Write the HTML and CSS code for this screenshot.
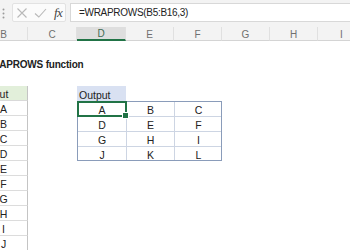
FILE: index.html
```html
<!DOCTYPE html>
<html>
<head>
<meta charset="utf-8">
<link rel="stylesheet" href="styles.css">
</head>
<body>
<div class="app">
  <div class="fbar">
    <svg class="grip" width="3" height="11" viewBox="0 0 3 11"><circle cx="1.5" cy="1.5" r="1"/><circle cx="1.5" cy="5.5" r="1"/><circle cx="1.5" cy="9.5" r="1"/></svg>
    <div class="fbtns">
      <svg class="ico" width="12" height="12" viewBox="0 0 12 12"><path d="M1.5 1.5 L10.5 10.5 M10.5 1.5 L1.5 10.5"/></svg>
      <svg class="ico" width="13" height="12" viewBox="0 0 13 12"><path d="M1 6.5 L4.8 10 L12 2"/></svg>
      <span class="fx">fx</span>
    </div>
    <div class="finput">=WRAPROWS(B5:B16,3)</div>
  </div>
  <div class="sheet">
    <div class="grid">
      <div class="ch">B</div>
      <div class="ch">C</div>
      <div class="ch sel">D</div>
      <div class="ch">E</div>
      <div class="ch">F</div>
      <div class="ch">G</div>
      <div class="ch">H</div>
      <div class="ch">I</div>

      <div class="title">WRAPROWS function</div>

      <div class="in-h">Input</div>
      <div class="in r6">A</div>
      <div class="in r7">B</div>
      <div class="in r8">C</div>
      <div class="in r9">D</div>
      <div class="in r10">E</div>
      <div class="in r11">F</div>
      <div class="in r12">G</div>
      <div class="in r13">H</div>
      <div class="in r14">I</div>
      <div class="in r15">J</div>
      <div class="in r16">K</div>

      <div class="out-h">Output</div>
      <div class="out">
        <div class="oc active">A</div>
        <div class="oc">B</div>
        <div class="oc">C</div>
        <div class="oc">D</div>
        <div class="oc">E</div>
        <div class="oc">F</div>
        <div class="oc">G</div>
        <div class="oc">H</div>
        <div class="oc">I</div>
        <div class="oc">J</div>
        <div class="oc">K</div>
        <div class="oc">L</div>
      </div>
    </div>
  </div>
</div>
</body>
</html>
```

FILE: styles.css
```css
* { box-sizing: border-box; }
html, body { margin: 0; padding: 0; background: #fff; }
.app { width: 350px; height: 250px; overflow: hidden; font-family: "Liberation Sans", Arial, sans-serif; }

.fbar {
  height: 27px;
  background: #f3f3f3;
  display: flex;
  align-items: flex-start;
  padding-top: 3px;
}
.grip { fill: #9a9a9a; margin: 5px 0 0 2px; }
.fbtns {
  margin-left: 7px;
  width: 54px;
  height: 19px;
  background: #fbfbfb;
  border: 1px solid #e2e2e2;
  border-radius: 2px;
  display: flex;
  align-items: center;
  padding-left: 3px;
  gap: 6px;
}
.ico { fill: none; stroke: #b9b9b9; stroke-width: 1.1; }
.fx {
  font-family: "Liberation Serif", "Times New Roman", serif;
  font-style: italic;
  font-size: 13px;
  color: #444;
  margin-left: 1px;
  letter-spacing: -0.5px;
}
.finput {
  margin-left: 4px;
  flex: 1;
  height: 19px;
  background: #fff;
  border: 1px solid #d8d8d8;
  border-right: none;
  padding-left: 8px;
  font-size: 10px;
  letter-spacing: -0.3px;
  color: #222;
  line-height: 17px;
}

.sheet { width: 350px; overflow: hidden; }
.grid {
  margin-left: -20px;
  display: grid;
  grid-template-columns: 48px 49px 49px 48px 48px 48px 48px 48px;
  grid-template-rows: 14px repeat(16, 15px);
}
.ch {
  grid-row: 1;
  background: #f3f3f3;
  border-bottom: 1px solid #d4d4d4;
  border-right: 1px solid #e0e0e0;
  font-size: 10px;
  color: #707070;
  display: flex;
  align-items: center;
  justify-content: center;
  padding-top: 1px;
}
.ch.sel {
  background: #dedede;
  border-bottom: 2px solid #217346;
  color: #3f6a52;
}

.title {
  grid-row: 3;
  grid-column: 1 / span 4;
  font-weight: bold;
  font-size: 10px;
  letter-spacing: -0.2px;
  color: #222;
  padding-left: 3px;
  display: flex;
  align-items: center;
  padding-top: 2px;
}

.in-h, .in, .out-h, .oc {
  font-size: 10.5px;
  color: #222;
  display: flex;
  align-items: center;
  padding-top: 2px;
}
.in-h {
  grid-row: 5;
  grid-column: 1;
  background: #e2efda;
  border-right: 1px solid #c4c4c4;
  border-bottom: 1px solid #d9d9d9;
  padding-left: 5px;
}
.in {
  grid-column: 1;
  justify-content: center;
  border-right: 1px solid #c4c4c4;
  border-bottom: 1px solid #dcdcdc;
}
.r6 { grid-row: 6; } .r7 { grid-row: 7; } .r8 { grid-row: 8; } .r9 { grid-row: 9; }
.r10 { grid-row: 10; } .r11 { grid-row: 11; } .r12 { grid-row: 12; } .r13 { grid-row: 13; }
.r14 { grid-row: 14; } .r15 { grid-row: 15; } .r16 { grid-row: 16; }

.out-h {
  grid-row: 5;
  grid-column: 3;
  background: #d9e1f2;
  padding-left: 2px;
}
.out {
  grid-row: 6 / span 4;
  grid-column: 3 / span 3;
  display: grid;
  grid-template-columns: 49px 48px 48px;
  grid-template-rows: repeat(4, 15px);
  outline: 1px solid #8a9cba;
  outline-offset: -1px;
}
.oc {
  justify-content: center;
  border-top: 1px solid #cdd5e3;
  border-left: 1px solid #cdd5e3;
}
.oc.active { position: relative; }
.oc.active::after {
  content: "";
  position: absolute;
  left: -1px; top: -1px; right: -1px; bottom: -1px;
  border: 2px solid #217346;
}
.oc.active::before {
  content: "";
  position: absolute;
  right: -3px; bottom: -3px;
  width: 5px; height: 5px;
  background: #217346;
  border: 1px solid #fff;
  z-index: 2;
}
```
